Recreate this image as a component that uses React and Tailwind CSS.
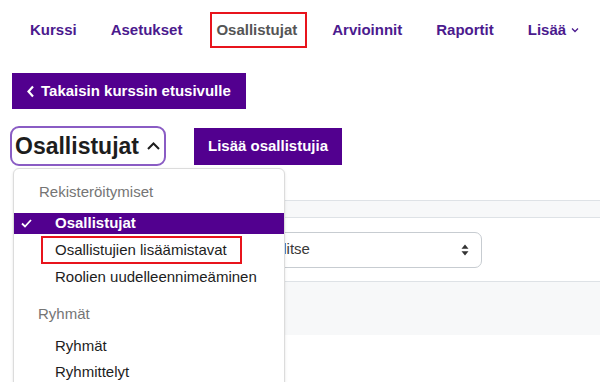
import React from "react";

const navItems = ["Kurssi", "Asetukset", "Osallistujat", "Arvioinnit", "Raportit"];

const Check = () => (
  <svg width="11" height="9" viewBox="0 0 11 9" fill="none" stroke="white" strokeWidth="1.8">
    <path d="M1 4.5 L4 7.5 L10 1" />
  </svg>
);

export default function App() {
  return (
    <div className="relative w-[600px] h-[382px] overflow-hidden bg-white font-['Liberation_Sans',Arial,sans-serif]">
      {/* top navigation */}
      <nav className="flex items-center gap-[34px] pl-[30px] pt-[12px] h-[48px] text-[15px] font-bold text-[#4b1a8e]">
        {navItems.map((item) =>
          item === "Osallistujat" ? (
            <span
              key={item}
              className="-ml-[6px] -mr-[9px] pl-[4px] pr-[8px] h-[36px] flex items-center border-2 border-[#e8141c] text-[#555]"
            >
              {item}
            </span>
          ) : (
            <span key={item}>{item}</span>
          )
        )}
        <span className="flex items-center gap-[5px]">
          Lisää
          <svg width="8" height="6" viewBox="0 0 8 6" fill="none" stroke="#4b1a8e" strokeWidth="1.3">
            <path d="M1 1.5 L4 4.5 L7 1.5" />
          </svg>
        </span>
      </nav>

      {/* back button */}
      <div className="pl-[12px] mt-[25px]">
        <button className="flex items-center gap-[6px] h-[36px] w-[234px] pl-[14px] bg-[#52008f] text-white text-[15px] font-bold">
          <svg width="9" height="13" viewBox="0 0 9 13" fill="none" stroke="white" strokeWidth="2.2">
            <path d="M7 1.5 L2.5 6.5 L7 11.5" />
          </svg>
          Takaisin kurssin etusivulle
        </button>
      </div>

      {/* heading row */}
      <div className="flex items-center pl-[10px] mt-[17px] gap-[28px]">
        <div className="flex items-center gap-[7px] h-[40px] w-[156px] pl-[3px] border-2 border-[#8a5cc4] rounded-[9px]">
          <span className="text-[23px] font-bold text-[#1d1d1d]">Osallistujat</span>
          <svg width="15" height="10" viewBox="0 0 15 10" fill="none" stroke="#1d1d1d" strokeWidth="2">
            <path d="M2 8 L7.5 2.5 L13 8" />
          </svg>
        </div>
        <button className="h-[37px] px-[14px] bg-[#52008f] text-white text-[15px] font-bold">
          Lisää osallistujia
        </button>
      </div>

      {/* page content behind menu */}
      <div className="ml-[13px] mt-[34px] border-t border-[#dee2e6]">
        <div className="h-[17px] bg-[#f7f8f9] border-b border-[#dee2e6]"></div>
        <div className="h-[63px] flex items-center">
          <div className="ml-[240px] w-[229px] h-[36px] flex items-center justify-between px-[12px] border border-[#c7ccd1] rounded-[7px] text-[15px] text-[#3a3a3a]">
            Valitse
            <svg width="8" height="12" viewBox="0 0 8 12" fill="#333">
              <path d="M4 0.5 L7.5 4.8 H0.5 Z M4 11.5 L0.5 7.2 H7.5 Z" />
            </svg>
          </div>
        </div>
        <div className="h-[54px] bg-[#f7f8f9] border-t border-[#dee2e6]"></div>
      </div>

      {/* dropdown menu */}
      <div className="absolute left-[13px] top-[168px] w-[272px] h-[240px] bg-white border border-[#dcdcdc] rounded-[6px] shadow-sm text-[15px]">
        <div className="pl-[25px] pt-[12px] h-[44px] text-[#757575]">Rekisteröitymiset</div>
        <div className="flex items-center h-[21px] bg-[#52008f] text-white font-bold">
          <span className="w-[41px] pl-[7px] flex items-center">
            <Check />
          </span>
          Osallistujat
        </div>
        <div className="pl-[27px] pt-[2px]">
          <div className="w-[201px] h-[28px] flex items-center pl-[12px] border-2 border-[#e8141c] text-[#1d1d1d]">
            Osallistujien lisäämistavat
          </div>
        </div>
        <div className="pl-[41px] h-[27px] flex items-center text-[#1d1d1d]">Roolien uudelleennimeäminen</div>
        <div className="pl-[24px] h-[40px] pt-[7px] flex items-center text-[#757575]">Ryhmät</div>
        <div className="pl-[41px] h-[31px] flex items-center text-[#1d1d1d]">Ryhmät</div>
        <div className="pl-[41px] h-[20px] flex items-center text-[#1d1d1d]">Ryhmittelyt</div>
      </div>
    </div>
  );
}
